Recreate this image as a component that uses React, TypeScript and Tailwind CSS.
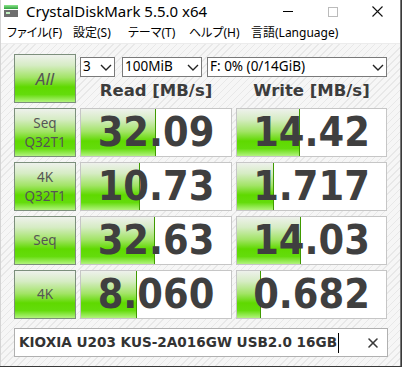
import { X } from "lucide-react"

type Row = {
    label: string[]
    read: string
    readBar: number
    write: string
    writeBar: number
}

const rows: Row[] = [
    { label: ["Seq", "Q32T1"], read: "32.09", readBar: 75, write: "14.42", writeBar: 63 },
    { label: ["4K", "Q32T1"], read: "10.73", readBar: 59, write: "1.717", writeBar: 37 },
    { label: ["Seq"], read: "32.63", readBar: 74, write: "14.03", writeBar: 64 },
    { label: ["4K"], read: "8.060", readBar: 56, write: "0.682", writeBar: 24 },
]

const menus = [
    { text: "ファイル(F)", w: "w-[66px]" },
    { text: "設定(S)", w: "w-[55px]" },
    { text: "テーマ(T)", w: "w-[61px]" },
    { text: "ヘルプ(H)", w: "w-[62px]" },
    { text: "言語(Language)", w: "w-[100px]" },
]

const uiFont = "font-['Noto_Sans','Noto_Sans_CJK_JP',sans-serif]"
const greenBg =
    "bg-[linear-gradient(to_bottom,#eef1ec_0%,#d6ecc4_22%,#a2e466_48%,#5fd900_68%,#64dc0c_84%,#b2f37e_100%)]"

function Chevron() {
    return (
        <svg width="12" height="7" viewBox="0 0 12 7" className="ml-auto shrink-0">
            <path d="M1 1 L6 6 L11 1" fill="none" stroke="#222" strokeWidth="1.4" />
        </svg>
    )
}

function Select({ text, w }: { text: string; w: string }) {
    return (
        <div className={`${w} h-[20px] border border-[#7a7a7a] bg-white flex items-center pl-[2px] pr-[2px] text-[13.5px] text-black ${uiFont}`}>
            <span className="leading-none">{text}</span>
            <Chevron />
        </div>
    )
}

function GreenButton({ children }: { children: React.ReactNode }) {
    return (
        <div className={`h-full border border-[#7c8f7c] ${greenBg} flex flex-col items-center justify-center text-[#555] ${uiFont}`}>
            {children}
        </div>
    )
}

function ScoreCell({ value, bar }: { value: string; bar: number }) {
    return (
        <div className="relative h-full border border-[#c6c6c6] bg-white overflow-hidden">
            <div
                className={`absolute left-0 top-0 bottom-0 border-r border-[#3f9a00] ${greenBg}`}
                style={{ width: bar }}
            />
            <div className="relative h-full flex items-center justify-center text-[41px] font-bold leading-none text-[#3f3f3f] font-['DejaVu_Sans_Condensed','DejaVu_Sans',sans-serif]">
                {value}
            </div>
        </div>
    )
}

export default function App() {
    return (
        <div className="w-[402px] h-[367px] bg-[#3a3a3a] overflow-hidden">
            <div className="w-[401px] h-[366px] bg-white border-l border-r border-l-[#d4d4d4] border-r-[#777] flex flex-col">
                {/* title bar */}
                <div className="h-[23px] flex items-center shrink-0">
                    <svg width="14" height="12" viewBox="0 0 14 12" className="ml-[3px] mt-[-1px]">
                        <defs>
                            <linearGradient id="ic" x1="0" y1="0" x2="0" y2="1">
                                <stop offset="0" stopColor="#8be68b" />
                                <stop offset="1" stopColor="#2f9f3c" />
                            </linearGradient>
                        </defs>
                        <rect x="0" y="0" width="14" height="4" fill="url(#ic)" />
                        <rect x="0" y="5" width="14" height="7" fill="#6e6e6e" />
                        <rect x="2" y="7" width="4" height="2" fill="#c2f2c2" />
                    </svg>
                    <span className={`ml-[8px] text-[15px] text-black ${uiFont}`}>CrystalDiskMark 5.5.0 x64</span>
                    <div className="ml-auto flex h-full">
                        <div className="w-[45px] h-full flex items-center justify-center">
                            <div className="w-[10px] h-px bg-black" />
                        </div>
                        <div className="w-[45px] h-full flex items-center justify-center">
                            <div className="w-[10px] h-[10px] border border-[#bbb]" />
                        </div>
                        <div className="w-[45px] h-full flex items-center justify-center">
                            <svg width="11" height="11" viewBox="0 0 11 11">
                                <path d="M0.5 0.5 L10.5 10.5 M10.5 0.5 L0.5 10.5" stroke="#111" strokeWidth="1.1" />
                            </svg>
                        </div>
                    </div>
                </div>

                {/* menu bar */}
                <div className={`h-[21px] flex items-center pl-[6px] text-[12px] text-black border-b border-[#ececec] shrink-0 ${uiFont} [font-feature-settings:'palt']`}>
                    {menus.map((m) => (
                        <span key={m.text} className={`${m.w} shrink-0 whitespace-nowrap`}>
                            {m.text}
                        </span>
                    ))}
                </div>

                {/* main */}
                <div className="flex-1 pl-[13px] pt-[10px] bg-[repeating-linear-gradient(135deg,#f6f6f6_0px,#f6f6f6_4px,#e8e8e8_4px,#e8e8e8_5px)]">
                    <div className="grid grid-cols-[62px_152px_151px] grid-rows-[49px_49px_49px_49px_49px] gap-x-[4px] gap-y-[5px]">
                        <GreenButton>
                            <span className="text-[17px] italic">All</span>
                        </GreenButton>
                        <div className="col-span-2 flex flex-col">
                            <div className="mt-[3px] flex">
                                <Select text="3" w="w-[35px]" />
                                <div className="w-[7px]" />
                                <Select text="100MiB" w="w-[80px]" />
                                <div className="w-[5px]" />
                                <Select text="F: 0% (0/14GiB)" w="w-[180px]" />
                            </div>
                            <div className="mt-[6px] flex gap-x-[4px] text-[16.5px] font-bold leading-none text-[#3c3c3c] font-['DejaVu_Sans',sans-serif]">
                                <div className="w-[152px] text-center">Read [MB/s]</div>
                                <div className="w-[151px] text-center">Write [MB/s]</div>
                            </div>
                        </div>

                        {rows.map((r, i) => (
                            <div key={i} className="contents">
                                <GreenButton>
                                    {r.label.map((l) => (
                                        <span key={l} className="text-[13.5px] leading-[19px]">
                                            {l}
                                        </span>
                                    ))}
                                </GreenButton>
                                <ScoreCell value={r.read} bar={r.readBar} />
                                <ScoreCell value={r.write} bar={r.writeBar} />
                            </div>
                        ))}
                    </div>

                    <div className="mt-[9px] w-[374px] h-[29px] border border-[#b0b0b0] bg-white flex items-center pl-[4px]">
                        <span className="text-[13.6px] font-bold text-[#333] whitespace-nowrap font-['DejaVu_Sans',sans-serif]">
                            KIOXIA U203 KUS-2A016GW USB2.0 16GB
                        </span>
                        <span className="ml-[1px] w-px h-[20px] bg-black" />
                        <X size={16} strokeWidth={2.4} className="ml-auto mr-[6px] text-[#3a3a3a]" />
                    </div>
                </div>
            </div>
        </div>
    )
}
